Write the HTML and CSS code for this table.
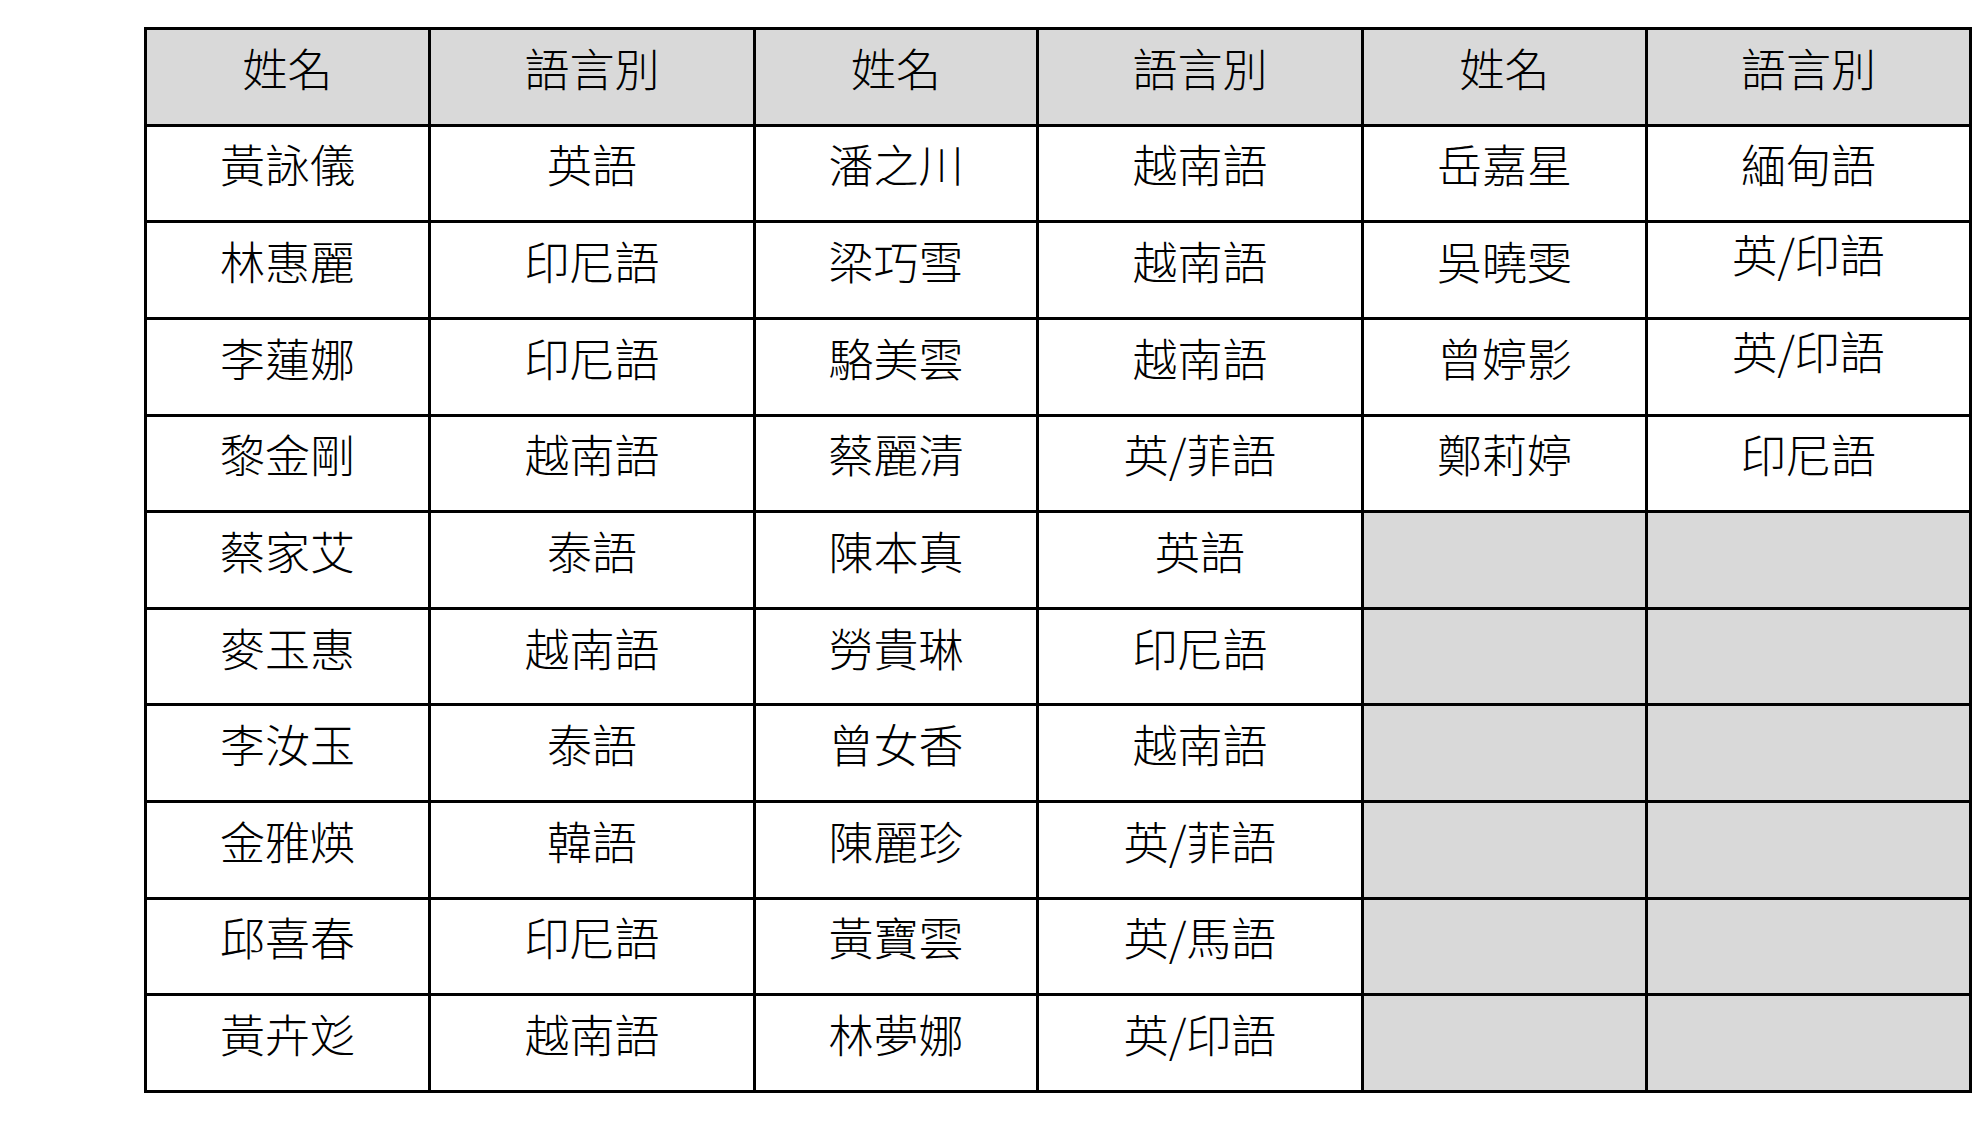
FILE: index.html
```html
<!DOCTYPE html>
<html lang="zh-Hant">
<head>
<meta charset="utf-8">
<title>語言別名單</title>
<link rel="stylesheet" href="styles.css">
</head>
<body>
<table class="roster">
  <colgroup>
    <col class="c-name"><col class="c-lang"><col class="c-name2"><col class="c-lang"><col class="c-name"><col class="c-lang2">
  </colgroup>
  <thead>
    <tr><th>姓名</th><th>語言別</th><th>姓名</th><th>語言別</th><th>姓名</th><th>語言別</th></tr>
  </thead>
  <tbody>
    <tr><td>黃詠儀</td><td>英語</td><td>潘之川</td><td>越南語</td><td>岳嘉星</td><td>緬甸語</td></tr>
    <tr><td>林惠麗</td><td>印尼語</td><td>梁巧雪</td><td>越南語</td><td>吳曉雯</td><td class="up">英/印語</td></tr>
    <tr><td>李蓮娜</td><td>印尼語</td><td>駱美雲</td><td>越南語</td><td>曾婷影</td><td class="up">英/印語</td></tr>
    <tr><td>黎金剛</td><td>越南語</td><td>蔡麗清</td><td>英/菲語</td><td>鄭莉婷</td><td>印尼語</td></tr>
    <tr><td>蔡家艾</td><td>泰語</td><td>陳本真</td><td>英語</td><td class="empty"></td><td class="empty"></td></tr>
    <tr><td>麥玉惠</td><td>越南語</td><td>勞貴琳</td><td>印尼語</td><td class="empty"></td><td class="empty"></td></tr>
    <tr><td>李汝玉</td><td>泰語</td><td>曾女香</td><td>越南語</td><td class="empty"></td><td class="empty"></td></tr>
    <tr><td>金雅煐</td><td>韓語</td><td>陳麗珍</td><td>英/菲語</td><td class="empty"></td><td class="empty"></td></tr>
    <tr><td>邱喜春</td><td>印尼語</td><td>黃寶雲</td><td>英/馬語</td><td class="empty"></td><td class="empty"></td></tr>
    <tr><td>黃卉彣</td><td>越南語</td><td>林夢娜</td><td>英/印語</td><td class="empty"></td><td class="empty"></td></tr>
  </tbody>
</table>
</body>
</html>
```
FILE: styles.css
```css
html, body {
  margin: 0;
  padding: 0;
  background: #ffffff;
}

body {
  font-family: "Noto Sans CJK TC", "Noto Sans CJK SC", "Noto Sans", sans-serif;
  font-weight: 300;
  color: #000000;
}

.roster {
  margin: 27px 0 0 144px;
  border-collapse: collapse;
  table-layout: fixed;
  width: 1828px;
}

.c-name { width: 284px; }
.c-name2 { width: 283px; }
.c-lang { width: 325px; }
.c-lang2 { width: 324px; }

.roster tr {
  height: 96.64px;
}

.roster th,
.roster td {
  border: 3px solid #000000;
  padding: 0 0 18px 0;
  text-align: center;
  vertical-align: middle;
  font-size: 45px;
  font-weight: 300;
  line-height: 56px;
  white-space: nowrap;
}

.roster th {
  background: #d9d9d9;
}

.roster td.up {
  padding-bottom: 32px;
}

.roster td.empty {
  background: #d9d9d9;
}
```
